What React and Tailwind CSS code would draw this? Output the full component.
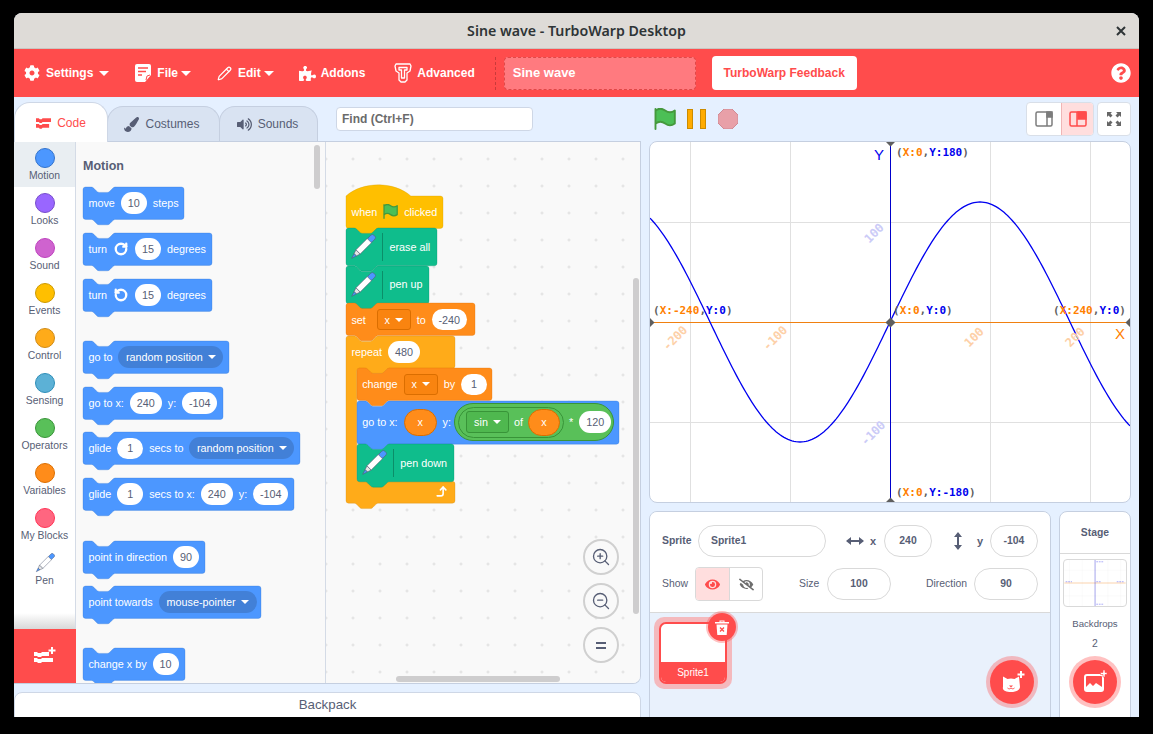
import { RotateCw, RotateCcw, CornerRightUp, ZoomIn, ZoomOut, Pencil } from 'lucide-react';
import { FaCog, FaPuzzlePiece, FaQuestionCircle, FaPaintBrush, FaVolumeUp, FaEye, FaEyeSlash } from 'react-icons/fa';

const S = 0.675;
const H = 32.4;

const COLORS = {
  motion: ['#4c97ff', '#3373cc', '#4280d7'],
  events: ['#ffbf00', '#cc9900', '#e6ac00'],
  pen: ['#0fbd8c', '#0b8e69', '#0da57a'],
  vars: ['#ff8c1a', '#db6e00', '#f98410'],
  control: ['#ffab19', '#cf8b17', '#ec9c13'],
  ops: ['#59c059', '#389438', '#4fb84f'],
};

const NOTCH_TOP = 'H12 c2,0 3,1 4,2 l4,4 c1,1 2,2 4,2 h12 c2,0 3,-1 4,-2 l4,-4 c1,-1 2,-2 4,-2';
const notchBottom = (x) => `H${x} c-2,0 -3,1 -4,2 l-4,4 c-1,1 -2,2 -4,2 h-12 c-2,0 -3,-1 -4,-2 l-4,-4 c-1,-1 -2,-2 -4,-2`;

function stackPath(w, h, hat) {
  const W = w / S;
  const Hh = h / S;
  const top = hat ? 'M0,0 c25,-22 71,-22 96,0' : `M0,4 A4,4 0 0 1 4,0 ${NOTCH_TOP}`;
  return `${top} H${W - 4} a4,4 0 0 1 4,4 V${Hh - 4} a4,4 0 0 1 -4,4 ${notchBottom(48)} H4 a4,4 0 0 1 -4,-4 z`;
}

function cPath(w, arm, inner, foot) {
  const W = w / S;
  const a = arm / S;
  const b = (arm + inner) / S;
  const c = foot / S;
  return `M0,4 A4,4 0 0 1 4,0 ${NOTCH_TOP} H${W - 4} a4,4 0 0 1 4,4 V${a - 4} a4,4 0 0 1 -4,4 ${notchBottom(64)} H20 a4,4 0 0 0 -4,4 V${b - 4} a4,4 0 0 0 4,4 H${W - 4} a4,4 0 0 1 4,4 V${b + c - 4} a4,4 0 0 1 -4,4 ${notchBottom(48)} H4 a4,4 0 0 1 -4,-4 z`;
}

function Shape({ d, color }) {
  return (
    <svg className="absolute left-0 top-0 overflow-visible" width="1" height="1">
      <path d={d} transform={`scale(${S})`} fill={color[0]} stroke={color[1]} strokeOpacity="0.45" strokeWidth="1" />
    </svg>
  );
}

function Block({ w, h = H, color = COLORS.motion, hat, className = '', children }) {
  return (
    <div className={`relative shrink-0 ${className}`} style={{ width: w, height: h }}>
      <Shape d={stackPath(w, h, hat)} color={color} />
      <div className="relative flex h-full items-center gap-[6px] whitespace-nowrap pl-[5.4px] text-[10.8px] text-white">{children}</div>
    </div>
  );
}

function Num({ children, w = 26 }) {
  return (
    <span className="flex h-[21.6px] shrink-0 items-center justify-center rounded-full bg-white text-[10.8px] text-[#575e75]" style={{ width: w }}>
      {children}
    </span>
  );
}

function Caret({ className = 'border-t-white' }) {
  return <span className={`inline-block h-0 w-0 border-x-[4px] border-t-[4px] border-x-transparent ${className}`} />;
}

function Drop({ children, w, dark = '#4280d7' }) {
  return (
    <span className="flex h-[22px] shrink-0 items-center justify-center gap-[5px] rounded-full text-white" style={{ width: w, backgroundColor: dark }}>
      {children} <Caret />
    </span>
  );
}

function VarDrop({ children, w = 34, color = COLORS.vars, className = '' }) {
  return (
    <span
      className={`flex h-[21.6px] shrink-0 items-center justify-center gap-[5px] rounded-[3px] border ${className}`}
      style={{ width: w, backgroundColor: color[2], borderColor: color[1] }}
    >
      {children} <Caret />
    </span>
  );
}

function PenIcon({ size = 26, className = '' }) {
  return (
    <svg width={size} height={size} viewBox="-13 -13 26 26" className={`shrink-0 ${className}`}>
      <g transform="rotate(45)" stroke="#575e75" strokeWidth="0.6">
        <rect x="-2.800" y="-16" width="5.600" height="8" rx="2" fill="#4c97ff" />
        <rect x="-3" y="-9" width="6" height="16" fill="#ffffff" />
        <path d="M-3 7 L3 7 L1.600 11 L-1.600 11 Z" fill="#e6e6e6" />
        <path d="M-1.600 11 L1.600 11 L0 16 Z" fill="#4c97ff" />
      </g>
    </svg>
  );
}

function PenBlock({ w, children }) {
  return (
    <Block w={w} h={37.8} color={COLORS.pen}>
      <PenIcon className="-ml-[1px]" />
      <span className="h-[28px] w-px bg-[#0b8e69]" />
      <span>{children}</span>
    </Block>
  );
}

function GreenFlag({ size = 16 }) {
  return (
    <svg width={size} height={size} viewBox="0 0 16.63 17.5" className="shrink-0">
      <path d="M.75,2A6.44,6.44,0,0,1,8.44,2h0a6.44,6.44,0,0,0,7.69,0V12.4a6.44,6.44,0,0,1-7.69,0h0a6.44,6.44,0,0,0-7.69,0" fill="#4cbf56" stroke="#45993d" strokeWidth="1.5" strokeLinejoin="round" />
      <path d="M.75 16.75V.75" fill="none" stroke="#45993d" strokeWidth="1.5" strokeLinecap="round" />
    </svg>
  );
}

const CATEGORIES = [
  ['Motion', 'bg-[#4c97ff] border-[#3373cc]'],
  ['Looks', 'bg-[#9966ff] border-[#774dcb]'],
  ['Sound', 'bg-[#cf63cf] border-[#bd42bd]'],
  ['Events', 'bg-[#ffbf00] border-[#cc9900]'],
  ['Control', 'bg-[#ffab19] border-[#cf8b17]'],
  ['Sensing', 'bg-[#5cb1d6] border-[#2e8eb8]'],
  ['Operators', 'bg-[#59c059] border-[#389438]'],
  ['Variables', 'bg-[#ff8c1a] border-[#db6e00]'],
  ['My Blocks', 'bg-[#ff6680] border-[#ff3355]'],
];

function Category({ label, tone, active, children }) {
  return (
    <div className={`flex h-[45px] flex-col items-center pt-[6px] ${active ? 'bg-[#e9eef2]' : ''}`}>
      {children || <span className={`h-5 w-5 rounded-full border ${tone}`} />}
      <span className="mt-[1px] text-[10.4px] leading-[14px] text-[#575e75]">{label}</span>
    </div>
  );
}

function Palette() {
  return (
    <div className="relative h-full w-[250px] shrink-0 overflow-hidden border-r border-[#d4dbe6] bg-[#f9f9f9] pl-[7px]">
      <p className="pt-[16px] text-[12.5px] font-bold leading-[16px] text-[#575e75]">Motion</p>
      <div className="mt-[13px] flex flex-col">
        <Block w={101}>move <Num>10</Num> steps</Block>
        <Block w={129} className="mt-[13.6px]">turn <RotateCw size={14} strokeWidth={4} className="mx-[1px]" /> <Num>15</Num> degrees</Block>
        <Block w={129} className="mt-[13.6px]">turn <RotateCcw size={14} strokeWidth={4} className="mx-[1px]" /> <Num>15</Num> degrees</Block>
        <Block w={146} className="mt-[29.3px]">go to <Drop w={105}>random position</Drop></Block>
        <Block w={140} className="mt-[13.6px]">go to x: <Num w={32}>240</Num> y: <Num w={35}>-104</Num></Block>
        <Block w={217} className="mt-[13.2px]">glide <Num>1</Num> secs to <Drop w={105}>random position</Drop></Block>
        <Block w={211} className="mt-[13.3px]">glide <Num>1</Num> secs to x: <Num w={32}>240</Num> y: <Num w={35}>-104</Num></Block>
        <Block w={122} className="mt-[30.3px]">point in direction <Num>90</Num></Block>
        <Block w={178} className="mt-[13px]">point towards <Drop w={98}>mouse-pointer</Drop></Block>
        <Block w={102} className="mt-[29.6px]">change x by <Num>10</Num></Block>
      </div>
      <span className="absolute left-[238px] top-[3px] h-[44px] w-[6px] rounded-full bg-[#cecdce]" />
    </div>
  );
}

function Script() {
  return (
    <div className="absolute left-[20px] top-[53.5px] w-[280px]">
      <Block w={97} color={COLORS.events} hat>when <GreenFlag size={15} /> clicked</Block>
      <PenBlock w={91}>erase all</PenBlock>
      <PenBlock w={83}>pen up</PenBlock>
      <Block w={129} color={COLORS.vars}>set <VarDrop className="ml-[5px]">x</VarDrop> to <Num w={35}>-240</Num></Block>
      <div className="relative h-[167px] w-[109px]">
        <Shape d={cPath(109, H, 112.8, 22)} color={COLORS.control} />
        <div className="relative flex h-[32.4px] items-center gap-[6px] pl-[5.4px] text-[10.8px] text-white">repeat <Num w={32}>480</Num></div>
        <div className="relative ml-[10.8px] text-[10.8px] text-white">
          <Block w={135} color={COLORS.vars}>change <VarDrop>x</VarDrop> by <Num>1</Num></Block>
          <Block w={262} h={43.2}>
            go to x:
            <span className="flex h-[27px] w-[33px] items-center justify-center rounded-full border border-[#db6e00] bg-[#ff8c1a]">x</span>
            y:
            <span className="-ml-[3px] flex h-[37.8px] w-[160px] items-center gap-[5px] rounded-full border border-[#389438] bg-[#59c059] pl-[3px]">
              <span className="flex h-[31px] w-[106px] shrink-0 items-center gap-[5px] rounded-full border border-[#389438] pl-[7px]">
                <VarDrop w={43} color={COLORS.ops}>sin</VarDrop> of
                <span className="flex h-[27px] w-[32px] items-center justify-center rounded-full border border-[#db6e00] bg-[#ff8c1a]">x</span>
              </span>
              <span>*</span>
              <span className="ml-[1px]"><Num w={32}>120</Num></span>
            </span>
          </Block>
          <PenBlock w={97}>pen down</PenBlock>
        </div>
        <CornerRightUp size={13} strokeWidth={3} className="absolute left-[89px] top-[149px] text-white" />
      </div>
    </div>
  );
}

function ZoomButton({ children, className = '' }) {
  return (
    <div className={`flex h-9 w-9 items-center justify-center rounded-full border-2 border-[#d0d0d0] bg-[#f9f9f9] text-[#575e75] ${className}`}>
      {children}
    </div>
  );
}

function Workspace() {
  return (
    <div className="relative h-full flex-1 overflow-hidden bg-[#f9f9f9] bg-[radial-gradient(#dedede_1px,transparent_1.2px)] bg-[size:27px_27px] bg-[position:-13.5px_3.5px]">
      <Script />
      <div className="absolute right-[21px] top-[397px] flex flex-col gap-2">
        <ZoomButton><ZoomIn size={20} strokeWidth={1.6} /></ZoomButton>
        <ZoomButton><ZoomOut size={20} strokeWidth={1.6} /></ZoomButton>
        <ZoomButton><span className="flex flex-col gap-[3px]"><i className="block h-[2px] w-[10px] bg-[#575e75]" /><i className="block h-[2px] w-[10px] bg-[#575e75]" /></span></ZoomButton>
      </div>
      <span className="absolute right-[1px] top-[136px] h-[336px] w-[6px] rounded-full bg-[#cecdce]" />
      <span className="absolute bottom-[1px] left-[70px] h-[6px] w-[164px] rounded-full bg-[#cecdce]" />
    </div>
  );
}

function ExtIcon({ className = '' }) {
  return (
    <svg width="22" height="20" viewBox="0 0 22 20" className={className} fill="#ffffff">
      <path d="M0 6h3l1 1h3l1-1h7v4H8l-1 1H4l-1-1H0z" />
      <path d="M0 12h3l1 1h3l1-1h11v4H8l-1 1H4l-1-1H0z" />
      <path d="M17 1h2v2.500h2.500v2H19V8h-2V5.500h-2.500v-2H17z" />
    </svg>
  );
}

function Tab({ label, icon, active, className = '' }) {
  if (active) {
    return (
      <div className={`relative z-10 flex h-[40px] items-center justify-center gap-[6px] rounded-t-[16px] border border-b-0 border-[#ced7e6] bg-white text-[12px] text-[#ff4c4c] ${className}`}>
        {icon}{label}
      </div>
    );
  }
  return (
    <div className={`-ml-px flex h-[35px] items-center justify-center gap-[6px] rounded-t-[16px] border border-b-0 border-[#c5cfe0] bg-[#d9e3f2] text-[12px] text-[#575e75] ${className}`}>
      {icon}{label}
    </div>
  );
}

function LeftColumn() {
  return (
    <div className="flex h-full w-[627px] shrink-0 flex-col">
      <div className="mt-[5px] flex h-[39px] shrink-0 items-end">
        <Tab
          active
          label="Code"
          className="mb-[-1px] w-[94px]"
          icon={
            <svg width="15" height="12" viewBox="0 0 16 12" fill="#ff4c4c">
              <path d="M0 1h3l1 1h2l1-1h9v4H7l-1 1H4L3 5H0z" />
              <path d="M0 7h3l1 1h2l1-1h7v4H7l-1 1H4l-1-1H0z" />
            </svg>
          }
        />
        <Tab label="Costumes" className="w-[113px] pr-[3px]" icon={<FaPaintBrush size={15} color="#575e75" />} />
        <Tab label="Sounds" className="w-[99px] pr-[2px]" icon={<FaVolumeUp size={15} color="#575e75" />} />
        <div className="mb-[10px] ml-[18px] flex h-[24px] w-[197px] items-center rounded-[4px] border border-[#ced7e6] bg-white pl-[5px] text-[12px] font-bold text-[#6b6b6b]">Find (Ctrl+F)</div>
      </div>
      <div className="relative flex h-[543px] shrink-0 overflow-hidden rounded-br-[8px] border border-l-0 border-[#c5cfe0] bg-[#f9f9f9]">
        <div className="relative h-full w-[62px] shrink-0 border-r border-[#d4dbe6] bg-white">
          {CATEGORIES.map(([label, tone], i) => (
            <Category key={label} label={label} tone={tone} active={i === 0} />
          ))}
          <Category label="Pen"><PenIcon size={20} /></Category>
          <div className="absolute bottom-[54px] left-0 h-[16px] w-full bg-gradient-to-b from-transparent to-[#d8d8d8]" />
          <div className="absolute bottom-0 left-0 flex h-[54px] w-[62px] items-center justify-center bg-[#ff4c4c]"><ExtIcon /></div>
        </div>
        <Palette />
        <Workspace />
      </div>
      <div className="mt-[8px] flex h-[40px] shrink-0 justify-center rounded-t-[8px] border border-[#ced7e6] bg-white pt-[4px] text-[13.3px] leading-[16px] text-[#575e75]">Backpack</div>
    </div>
  );
}

function Coord({ x, y, xv, yv }) {
  return (
    <text x={x} y={y} fontFamily="'DejaVu Sans Mono', monospace" fontWeight="700" fontSize="11" fill="#5f5f5f">
      (<tspan fill="#ff8000">X:{xv}</tspan>,<tspan fill="#0000ee">Y:{yv}</tspan>)
    </text>
  );
}

function Tick({ x, y, children, fill }) {
  return (
    <text x={x} y={y} transform={`rotate(-45 ${x} ${y})`} textAnchor="middle" fontFamily="'DejaVu Sans Mono', monospace" fontWeight="700" fontSize="12" fill={fill}>
      {children}
    </text>
  );
}

const wave = [];
for (let x = -240; x <= 240; x += 2) {
  wave.push(`${x + 240},${(180 - 120 * Math.sin((x * Math.PI) / 180)).toFixed(2)}`);
}

function StageGrid({ mini }) {
  const axis = mini ? 0.35 : 1;
  return (
    <>
      {[40.5, 140.5, 340.5, 440.5].map((x) => <line key={x} x1={x} x2={x} y1="0" y2="360" stroke={mini ? '#eeeeee' : '#e0e0e0'} strokeWidth={mini ? 2 : 1} />)}
      {[80.5, 280.5].map((y) => <line key={y} x1="0" x2="480" y1={y} y2={y} stroke={mini ? '#eeeeee' : '#e0e0e0'} strokeWidth={mini ? 2 : 1} />)}
      <line x1="0" x2="480" y1="180.5" y2="180.5" stroke="#f08010" strokeOpacity={axis} strokeWidth={mini ? 8 : 1} />
      <line x1="240.5" x2="240.5" y1="0" y2="360" stroke="#0000cc" strokeOpacity={axis} strokeWidth={mini ? 8 : 1} />
      {mini && <path d="M250 14h60M10 170h50M250 170h40M410 170h60M250 346h60" stroke="#0000ee" strokeOpacity="0.5" strokeWidth="5" strokeDasharray="14 6" />}
    </>
  );
}

function Stage() {
  return (
    <div className="h-[362px] w-[482px] shrink-0 overflow-hidden rounded-[8px] border border-[#c5cfe0] bg-white">
      <svg width="480" height="360" viewBox="0 0 480 360" className="block">
        <StageGrid />
        <polyline points={wave.join(' ')} fill="none" stroke="#0000f0" strokeWidth="1.3" />
        <path d="M236 0h9l-4.500 4.500zM236 360h9l-4.500-4.500zM0 176v9l4.500-4.500zM480 176v9l-4.500-4.500z" fill="#5f5f5f" />
        <path d="M240.500 175.500l5 5-5 5-5-5z" fill="#5f5f5f" />
        <Tick x={227} y={94} fill="#cbcbf7">100</Tick>
        <Tick x={226} y={294} fill="#cbcbf7">-100</Tick>
        <Tick x={28} y={199} fill="#fdd0a8">-200</Tick>
        <Tick x={128} y={199} fill="#fdd0a8">-100</Tick>
        <Tick x={327} y={198} fill="#fdd0a8">100</Tick>
        <Tick x={428} y={198} fill="#fdd0a8">200</Tick>
        <Coord x={246} y={14} xv="0" yv="180" />
        <Coord x={3} y={172} xv="-240" yv="0" />
        <Coord x={243} y={172} xv="0" yv="0" />
        <Coord x={403} y={172} xv="240" yv="0" />
        <Coord x={246} y={354} xv="0" yv="-180" />
        <text x={224} y={18} fontFamily="'Liberation Sans', sans-serif" fontSize="15" fill="#0000ee">Y</text>
        <text x={465} y={197} fontFamily="'Liberation Sans', sans-serif" fontSize="15" fill="#ff8000">X</text>
      </svg>
    </div>
  );
}

function Field({ children, className = '' }) {
  return (
    <div className={`flex h-[32px] items-center rounded-full border border-[#d9d9d9] bg-white text-[10.4px] font-bold text-[#575e75] ${className}`}>
      {children}
    </div>
  );
}

function CatIcon() {
  return (
    <svg width="26" height="24" viewBox="0 0 26 24" fill="#ffffff">
      <path d="M3 6.500l4.500 2.500c2-.7 5-.7 7 0L19 6.500 20 17c0 3-4 5-9 5s-9-2-8-5z" transform="translate(1 0)" />
      <path d="M21 1h2v2.500h2.500v2H23V8h-2V5.500h-2.500v-2H21z" />
      <path d="M10 15.500h4L12 17.500z" fill="#ff4c4c" />
      <path d="M8.500 18c1.500 1.200 2.500 1 3.500 0 1 1 2 1.200 3.500 0" fill="none" stroke="#ff4c4c" strokeWidth="1" />
    </svg>
  );
}

function BackdropIcon() {
  return (
    <svg width="24" height="24" viewBox="0 0 24 24">
      <rect x="1" y="4" width="20" height="18" rx="3" fill="#ffffff" />
      <rect x="3" y="6" width="16" height="14" rx="1" fill="#ff4c4c" />
      <path d="M3 17l4-4 3 3 3-3 6 4v3H3z" fill="#ffffff" />
      <path d="M20 0h2v2.500h2v2h-2V7h-2V4.500h-2.500v-2H20z" fill="#ffffff" stroke="#ff4c4c" strokeWidth="0.6" />
    </svg>
  );
}

function SpritePane() {
  return (
    <div className="h-[240px] w-[402px] shrink-0 overflow-hidden rounded-t-[8px] border border-[#c5cfe0] bg-[#e9f1fc]">
      <div className="h-[101px] border-b border-[#d9d9d9] bg-white pl-[12px] text-[10.4px] text-[#575e75]">
        <div className="flex h-[32px] translate-y-[13px] items-center">
          <span className="w-[36px] font-bold">Sprite</span>
          <Field className="w-[128px] pl-[12px]">Sprite1</Field>
          <svg width="18" height="10" viewBox="0 0 18 10" className="ml-[20px]" fill="#575e75">
            <path d="M0 5l5-4v3h8V1l5 4-5 4V6H5v3z" />
          </svg>
          <span className="ml-[6px] w-[14px] font-bold text-[11px]">x</span>
          <Field className="w-[48px] justify-center">240</Field>
          <svg width="10" height="18" viewBox="0 0 10 18" className="ml-[21px]" fill="#575e75">
            <path d="M5 0l4 5H6v8h3l-4 5-4-5h3V5H1z" />
          </svg>
          <span className="ml-[14px] w-[13px] font-bold text-[11px]">y</span>
          <Field className="w-[48px] justify-center">-104</Field>
        </div>
        <div className="flex h-[34px] translate-y-[23px] items-center">
          <span className="w-[33px]">Show</span>
          <div className="flex h-[34px] w-[68px] overflow-hidden rounded-[4px] border border-[#d9d9d9]">
            <span className="flex w-[34px] items-center justify-center border-r border-[#d9d9d9] bg-[#ffdede]"><FaEye size={15} color="#ff4c4c" /></span>
            <span className="flex flex-1 items-center justify-center"><FaEyeSlash size={15} color="#6e6e6e" /></span>
          </div>
          <span className="ml-[36px] w-[28px]">Size</span>
          <Field className="w-[64px] justify-center">100</Field>
          <span className="ml-[35px] w-[48px]">Direction</span>
          <Field className="w-[64px] justify-center">90</Field>
        </div>
      </div>
      <div className="relative h-[120px]">
        <div className="absolute left-[4px] top-[4px] h-[72px] w-[78px] rounded-[10px] bg-[#f4b9bd] p-[5px]">
          <div className="flex h-full flex-col overflow-hidden rounded-[7px] border-2 border-[#ff4c4c] bg-white">
            <div className="flex-1" />
            <div className="flex h-[20px] items-center justify-center bg-[#ff4c4c] text-[10px] text-white">Sprite1</div>
          </div>
        </div>
        <div className="absolute left-[58px] top-0 flex h-[28px] w-[28px] items-center justify-center rounded-full bg-[#ff4c4c] shadow-[0_0_0_2px_rgba(255,76,76,0.35)]">
          <svg width="16" height="17" viewBox="0 0 16 17" fill="#ffffff">
            <path d="M1 3h14v1.500H1zM5.500 3V1.500h5V3h-1V2.500h-3V3z" />
            <path d="M2.500 5.500h11l-.8 10.500H3.300z" />
            <path d="M6 8.500l4 4m0-4l-4 4" stroke="#ff4c4c" strokeWidth="1.3" />
          </svg>
        </div>
        <div className="absolute left-[340px] top-[47px] flex h-[44px] w-[44px] items-center justify-center rounded-full bg-[#ff4c4c] shadow-[0_0_0_4px_rgba(255,76,76,0.35)]"><CatIcon /></div>
      </div>
    </div>
  );
}

function StagePane() {
  return (
    <div className="relative h-[240px] w-[72px] shrink-0 overflow-hidden rounded-t-[8px] border border-[#c5cfe0] bg-white text-[#575e75]">
      <div className="flex h-[42px] items-center justify-center border-b border-[#d9d9d9] text-[10.4px] font-bold">Stage</div>
      <div className="mx-auto mt-[5px] h-[48px] w-[64px] overflow-hidden rounded-[4px] border border-[#d9d9d9]">
        <svg width="62" height="46" viewBox="0 0 480 360" className="block"><StageGrid mini /></svg>
      </div>
      <p className="mt-[11px] text-center text-[9.600px] leading-[12px]">Backdrops</p>
      <p className="mt-[8px] text-center text-[10.4px] leading-[12px]">2</p>
      <div className="absolute left-[13px] top-[148px] flex h-[44px] w-[44px] items-center justify-center rounded-full bg-[#ff4c4c] shadow-[0_0_0_4px_rgba(255,76,76,0.35)]"><BackdropIcon /></div>
    </div>
  );
}

function RightColumn() {
  return (
    <div className="ml-[8px] flex h-full w-[482px] shrink-0 flex-col">
      <div className="mt-[5px] flex h-[34px] shrink-0 items-center">
        <span className="ml-[5px]"><GreenFlag size={22} /></span>
        <span className="ml-[11px] h-[20px] w-[6px] border border-[#cc8b00] bg-[#ffab00]" />
        <span className="ml-[7px] h-[20px] w-[6px] border border-[#cc8b00] bg-[#ffab00]" />
        <svg width="20" height="20" viewBox="0 0 20 20" className="ml-[12px]">
          <path d="M6 0h8l6 6v8l-6 6H6l-6-6V6z" fill="#e8a0a8" stroke="#d08a94" />
        </svg>
        <div className="ml-auto flex h-[34px] w-[68px] overflow-hidden rounded-[4px] border border-[#d9dfe8] bg-white">
          <span className="flex w-[34px] items-center justify-center">
            <svg width="18" height="16" viewBox="0 0 18 16" fill="none" stroke="#7c7c7c" strokeWidth="1.5">
              <rect x="1" y="1" width="16" height="14" rx="1.500" />
              <rect x="12" y="1" width="5" height="5" fill="#7c7c7c" />
              <path d="M12 1v14" />
            </svg>
          </span>
          <span className="flex flex-1 items-center justify-center border-l border-[#f0b5b5] bg-[#ffdede]">
            <svg width="18" height="16" viewBox="0 0 18 16" fill="none" stroke="#ff4c4c" strokeWidth="1.5">
              <rect x="1" y="1" width="16" height="14" rx="1.500" />
              <rect x="9" y="1" width="8" height="7" fill="#ff4c4c" />
              <path d="M8 1v14" />
            </svg>
          </span>
        </div>
        <span className="ml-[3px] flex h-[34px] w-[34px] items-center justify-center rounded-[4px] border border-[#d9dfe8] bg-white">
          <svg width="14" height="14" viewBox="0 0 14 14" fill="#666666">
            <path d="M0 0h5L3.500 1.500 5.500 3.500 3.500 5.500 1.500 3.500 0 5zM14 0v5L12.500 3.500 10.500 5.500 8.500 3.500 10.500 1.500 9 0zM0 14V9L1.500 10.500 3.500 8.500 5.500 10.500 3.500 12.500 5 14zM14 14H9L10.500 12.500 8.500 10.500 10.500 8.500 12.500 10.500 14 9z" />
          </svg>
        </span>
      </div>
      <div className="mt-[5px]"><Stage /></div>
      <div className="mt-[8px] flex gap-[8px]">
        <SpritePane />
        <StagePane />
      </div>
    </div>
  );
}

function MenuItem({ icon, label, caret, gap = 'ml-[6px]', className = '' }) {
  return (
    <div className={`flex items-center text-[12px] font-bold text-white ${className}`}>
      {icon}
      <span className={gap}>{label}</span>
      {caret && <Caret className={`border-t-white ${caret}`} />}
    </div>
  );
}

function MenuBar() {
  return (
    <div className="flex h-[48px] shrink-0 items-center bg-[#ff4c4c]">
      <MenuItem className="ml-[10px]" icon={<FaCog size={16} />} label="Settings" caret="ml-[6px] border-x-[5px] border-t-[5px]" />
      <MenuItem
        className="ml-[26px]"
        icon={
          <svg width="16" height="18" viewBox="0 0 16 18">
            <path d="M2 0h12a2 2 0 0 1 2 2v9l-6 7H2a2 2 0 0 1-2-2V2a2 2 0 0 1 2-2z" fill="#ffffff" />
            <path d="M3 4h10M3 7.500h8M3 11h4" stroke="#ff4c4c" strokeWidth="1.6" />
            <path d="M11 16l1-4 3-1" fill="none" stroke="#ff4c4c" strokeWidth="1" />
          </svg>
        }
        label="File"
        caret="ml-[3px] border-x-[5px] border-t-[5px]"
      />
      <MenuItem className="ml-[26px]" icon={<Pencil size={15} strokeWidth={2} />} label="Edit" caret="ml-[3px] border-x-[5px] border-t-[5px]" />
      <MenuItem className="ml-[25px]" gap="ml-[5px]" icon={<FaPuzzlePiece size={17} />} label="Addons" />
      <MenuItem
        className="ml-[29px]"
        gap="ml-[5px]"
        icon={
          <svg width="18" height="20" viewBox="0 0 18 20" fill="none" stroke="#ffffff" strokeWidth="1.3" strokeLinejoin="round">
            <path d="M2 1h14l1 2-1 5-3 2v7l-2 2H7l-2-2v-7L2 8 1 3z" />
            <path d="M5 4.500h8v2.500h-2.500v8h-3V7H5z" />
          </svg>
        }
        label="Advanced"
      />
      <span className="ml-[20px] h-[33px] border-l border-dashed border-[#c93a3a]" />
      <div className="ml-[8px] flex h-[33px] w-[192px] items-center rounded-[4px] border border-dashed border-[#e04848] bg-[#ff7a7f] pl-[8px] text-[13px] font-bold text-white">Sine wave</div>
      <div className="ml-[16px] flex h-[34px] w-[145px] items-center justify-center rounded-[4px] bg-white text-[12px] font-bold text-[#ff4c4c]">TurboWarp Feedback</div>
      <FaQuestionCircle size={20} color="#ffffff" className="ml-auto mr-[8px]" />
    </div>
  );
}

export default function App() {
  return (
    <div className="h-[734px] w-[1153px] overflow-hidden bg-black pl-[14px] pt-[13px] font-['Liberation_Sans',sans-serif]">
      <div className="flex h-[704px] w-[1125px] flex-col overflow-hidden rounded-t-[8px] bg-[#e5f0ff]">
        <div className="relative flex h-[36px] shrink-0 items-center justify-center border-b border-[#c9c5c0] bg-[#dedbd7] font-['Noto_Sans',sans-serif] text-[14.2px] font-semibold text-[#2e3436]">
          Sine wave - TurboWarp Desktop
          <svg width="10" height="10" viewBox="0 0 10 10" className="absolute right-[13px] top-[13px]" stroke="#2e3436" strokeWidth="2">
            <path d="M1 1l8 8M9 1l-8 8" />
          </svg>
        </div>
        <MenuBar />
        <div className="flex min-h-0 flex-1">
          <LeftColumn />
          <RightColumn />
        </div>
      </div>
    </div>
  );
}
